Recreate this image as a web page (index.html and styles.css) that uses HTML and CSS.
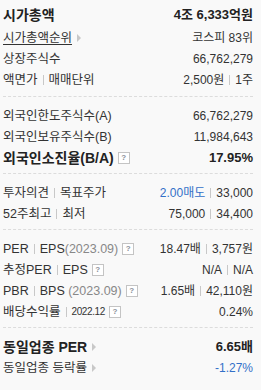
FILE: index.html
```html
<!DOCTYPE html>
<html lang="ko">
<head>
<meta charset="utf-8">
<link rel="stylesheet" href="styles.css">
</head>
<body>
<div class="panel">
  <section class="sec sec-first">
    <div class="row strong first"><span class="lbl">시가총액</span><span class="val">4조 6,333억원</span></div>
    <div class="row"><span class="lbl"><a class="link">시가총액순위</a><i class="arr"></i></span><span class="val">코스피 83위</span></div>
    <div class="row"><span class="lbl">상장주식수</span><span class="val">66,762,279</span></div>
    <div class="row"><span class="lbl">액면가<i class="bar"></i>매매단위</span><span class="val">2,500원<i class="bar"></i>1주</span></div>
  </section>
  <section class="sec">
    <div class="row"><span class="lbl">외국인한도주식수(A)</span><span class="val">66,762,279</span></div>
    <div class="row"><span class="lbl">외국인보유주식수(B)</span><span class="val">11,984,643</span></div>
    <div class="row strong"><span class="lbl">외국인소진율(B/A)<i class="help">?</i></span><span class="val">17.95%</span></div>
  </section>
  <section class="sec">
    <div class="row"><span class="lbl">투자의견<i class="bar"></i>목표주가</span><span class="val"><em class="blue">2.00매도</em><i class="bar"></i>33,000</span></div>
    <div class="row"><span class="lbl">52주최고<i class="bar"></i>최저</span><span class="val">75,000<i class="bar"></i>34,400</span></div>
  </section>
  <section class="sec">
    <div class="row"><span class="lbl">PER<i class="bar"></i>EPS<em class="date">(2023.09)</em><i class="help">?</i></span><span class="val">18.47배<i class="bar"></i>3,757원</span></div>
    <div class="row"><span class="lbl">추정PER<i class="bar"></i>EPS<i class="help">?</i></span><span class="val">N/A<i class="bar"></i>N/A</span></div>
    <div class="row"><span class="lbl">PBR<i class="bar"></i>BPS&nbsp;<em class="date">(2023.09)</em><i class="help">?</i></span><span class="val">1.65배<i class="bar"></i>42,110원</span></div>
    <div class="row"><span class="lbl">배당수익률<i class="bar"></i><em class="tiny">2022.12</em><i class="help">?</i></span><span class="val">0.24%</span></div>
  </section>
  <section class="sec sec-last">
    <div class="row strong"><span class="lbl">동일업종 PER<i class="arr"></i></span><span class="val">6.65배</span></div>
    <div class="row"><span class="lbl">동일업종 등락률<i class="arr"></i></span><span class="val blue">-1.27%</span></div>
  </section>
</div>
</body>
</html>
```
FILE: styles.css
```css
html, body {
  margin: 0;
  padding: 0;
  background: #f9f9f9;
}
body {
  font-family: "Liberation Sans", "Noto Sans CJK KR", sans-serif;
  font-size: 12px;
  color: #333;
}
.panel {
  width: 261px;
  box-sizing: border-box;
  padding: 0 8px 0 3px;
}
.sec {
  border-bottom: 1px dashed #dcdcdc;
  padding: 8px 0 5px;
}
.sec-first {
  padding-top: 3px;
  padding-bottom: 6px;
}
.sec-last {
  border-bottom: none;
}
.row {
  display: flex;
  justify-content: space-between;
  align-items: center;
  height: 21px;
  line-height: 20px;
  white-space: nowrap;
}
.first {
  height: 24px;
}
.lbl, .val {
  display: flex;
  align-items: center;
}
.lbl {
  font-size: 12.5px;
}
.strong {
  font-weight: bold;
  color: #222;
}
.strong .lbl {
  font-size: 14px;
}
.strong .val {
  font-size: 13px;
}
.link {
  color: #333;
  text-decoration: underline;
  text-underline-offset: 2px;
}
.bar {
  display: inline-block;
  width: 1px;
  height: 10px;
  background: #c8c8c8;
  margin: 0 5px;
}
.arr {
  display: inline-block;
  width: 0;
  height: 0;
  border-top: 4px solid transparent;
  border-bottom: 4px solid transparent;
  border-left: 4px solid #c8c8c8;
  margin-left: 5px;
}
.help {
  display: inline-flex;
  align-items: center;
  justify-content: center;
  width: 10px;
  height: 10px;
  border: 1px solid #c4c4c4;
  background: #fff;
  color: #8a9099;
  font-size: 8px;
  font-weight: bold;
  font-style: normal;
  line-height: 1;
  margin-left: 4px;
}
em {
  font-style: normal;
}
.date {
  color: #888;
  font-size: 12.5px;
}
.tiny {
  font-size: 10px;
  letter-spacing: -0.4px;
  color: #333;
}
.blue {
  color: #3370c8;
}
```
